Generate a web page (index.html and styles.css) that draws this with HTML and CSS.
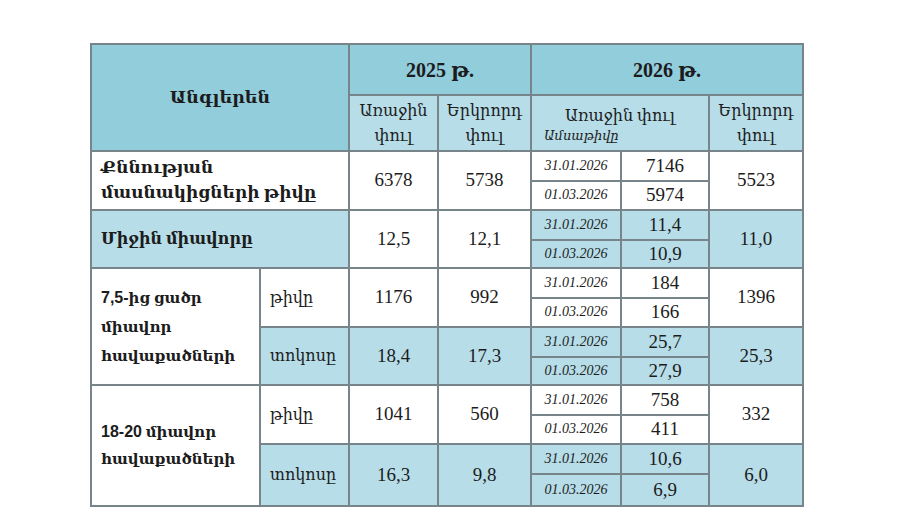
FILE: index.html
```html
<!DOCTYPE html>
<html lang="hy">
<head>
<meta charset="utf-8">
<title>Անգլերեն</title>
<link rel="stylesheet" href="styles.css">
</head>
<body>
<div class="page">
<table class="results">
  <colgroup>
    <col class="c-label">
    <col class="c-sub">
    <col class="c-v1">
    <col class="c-v2">
    <col class="c-date">
    <col class="c-val">
    <col class="c-v3">
  </colgroup>
  <thead>
    <tr class="h1">
      <th colspan="2" rowspan="2" class="dark subject">Անգլերեն</th>
      <th colspan="2" class="dark year">2025 թ.</th>
      <th colspan="3" class="dark year">2026 թ.</th>
    </tr>
    <tr class="h2">
      <th class="light phase">Առաջին<br>փուլ</th>
      <th class="light phase">Երկրորդ<br>փուլ</th>
      <th colspan="2" class="light phase first26"><span class="ph-title">Առաջին փուլ</span><span class="ph-date">Ամսաթիվը</span></th>
      <th class="light phase">Երկրորդ<br>փուլ</th>
    </tr>
  </thead>
  <tbody>
    <tr class="r-top">
      <td colspan="2" rowspan="2" class="label big">Քննության<br>մասնակիցների թիվը</td>
      <td rowspan="2" class="num">6378</td>
      <td rowspan="2" class="num">5738</td>
      <td class="date split">31.01.2026</td>
      <td class="num small split">7146</td>
      <td rowspan="2" class="num">5523</td>
    </tr>
    <tr class="r-bot">
      <td class="date">01.03.2026</td>
      <td class="num small">5974</td>
    </tr>

    <tr class="r-top">
      <td colspan="2" rowspan="2" class="label mid shade">Միջին միավորը</td>
      <td rowspan="2" class="num">12,5</td>
      <td rowspan="2" class="num">12,1</td>
      <td class="date split shade">31.01.2026</td>
      <td class="num small split shade">11,4</td>
      <td rowspan="2" class="num shade">11,0</td>
    </tr>
    <tr class="r-bot">
      <td class="date shade">01.03.2026</td>
      <td class="num small shade">10,9</td>
    </tr>

    <tr class="r-top">
      <td rowspan="4" class="label group"><span class="lat">7,5-</span>ից ցածր<br>միավոր<br>հավաքածների</td>
      <td rowspan="2" class="sub">թիվը</td>
      <td rowspan="2" class="num">1176</td>
      <td rowspan="2" class="num">992</td>
      <td class="date split">31.01.2026</td>
      <td class="num small split">184</td>
      <td rowspan="2" class="num">1396</td>
    </tr>
    <tr class="r-bot">
      <td class="date">01.03.2026</td>
      <td class="num small">166</td>
    </tr>
    <tr class="r-top">
      <td rowspan="2" class="sub shade">տոկոսը</td>
      <td rowspan="2" class="num shade">18,4</td>
      <td rowspan="2" class="num shade">17,3</td>
      <td class="date split shade">31.01.2026</td>
      <td class="num small split shade">25,7</td>
      <td rowspan="2" class="num shade">25,3</td>
    </tr>
    <tr class="r-bot">
      <td class="date shade">01.03.2026</td>
      <td class="num small shade">27,9</td>
    </tr>

    <tr class="r-top">
      <td rowspan="4" class="label group group2"><span class="lat">18-20</span> միավոր<br>հավաքածների</td>
      <td rowspan="2" class="sub">թիվը</td>
      <td rowspan="2" class="num">1041</td>
      <td rowspan="2" class="num">560</td>
      <td class="date split">31.01.2026</td>
      <td class="num small split">758</td>
      <td rowspan="2" class="num">332</td>
    </tr>
    <tr class="r-bot">
      <td class="date">01.03.2026</td>
      <td class="num small">411</td>
    </tr>
    <tr class="r-top">
      <td rowspan="2" class="sub shade">տոկոսը</td>
      <td rowspan="2" class="num shade">16,3</td>
      <td rowspan="2" class="num shade">9,8</td>
      <td class="date split shade">31.01.2026</td>
      <td class="num small split shade">10,6</td>
      <td rowspan="2" class="num shade">6,0</td>
    </tr>
    <tr class="r-bot last">
      <td class="date shade">01.03.2026</td>
      <td class="num small shade">6,9</td>
    </tr>
  </tbody>
</table>
</div>
</body>
</html>
```

FILE: styles.css
```css
html, body {
  margin: 0;
  padding: 0;
  background: #ffffff;
}

.page {
  padding: 43px 0 0 90px;
}

.results {
  border-collapse: collapse;
  table-layout: fixed;
  width: 712px;
  font-family: "Liberation Serif", "DejaVu Serif", serif;
  color: #1c1c1c;
}

.c-label { width: 169px; }
.c-sub   { width: 89px; }
.c-v1    { width: 89px; }
.c-v2    { width: 93px; }
.c-date  { width: 90px; }
.c-val   { width: 88px; }
.c-v3    { width: 94px; }

.results th,
.results td {
  border: 2px solid #77848a;
  padding: 0;
  vertical-align: middle;
  text-align: center;
}

.h1 { height: 51px; }
.h2 { height: 56px; }
.r-top { height: 30px; }
.r-bot { height: 28.5px; }
.last { height: 32px; }

.dark {
  background: #92cddc;
}

.light,
.shade {
  background: #b7dde8;
}

.subject {
  font-size: 17.5px;
  font-weight: bold;
  padding-bottom: 2px;
}

.year {
  font-size: 20px;
  font-weight: bold;
}

.phase {
  font-size: 16px;
  font-weight: normal;
  line-height: 25px;
}

.results th.first26 {
  text-align: left;
}

.ph-title {
  display: block;
  text-align: center;
}

.ph-date {
  display: block;
  padding-left: 12px;
  font-size: 13px;
  font-style: italic;
  line-height: 16px;
}

.results td.label {
  text-align: left;
  padding-left: 9px;
  font-size: 15px;
  font-weight: bold;
  line-height: 26px;
}

.results td.big {
  font-size: 17px;
  line-height: 25px;
}

.results td.mid {
  font-size: 16px;
}

.results td.group {
  line-height: 29px;
}

.results td.group2 {
  line-height: 27px;
}

.lat {
  font-family: "Liberation Sans", "DejaVu Sans", sans-serif;
  font-size: 16px;
}

.results td.sub {
  text-align: left;
  padding-left: 9px;
  font-size: 16px;
}

.num {
  font-size: 19px;
}

.small {
  line-height: 20px;
}

.date {
  font-size: 14px;
  font-style: italic;
}

.results td.split {
  border-bottom: 1px solid #4f5558;
}
```
